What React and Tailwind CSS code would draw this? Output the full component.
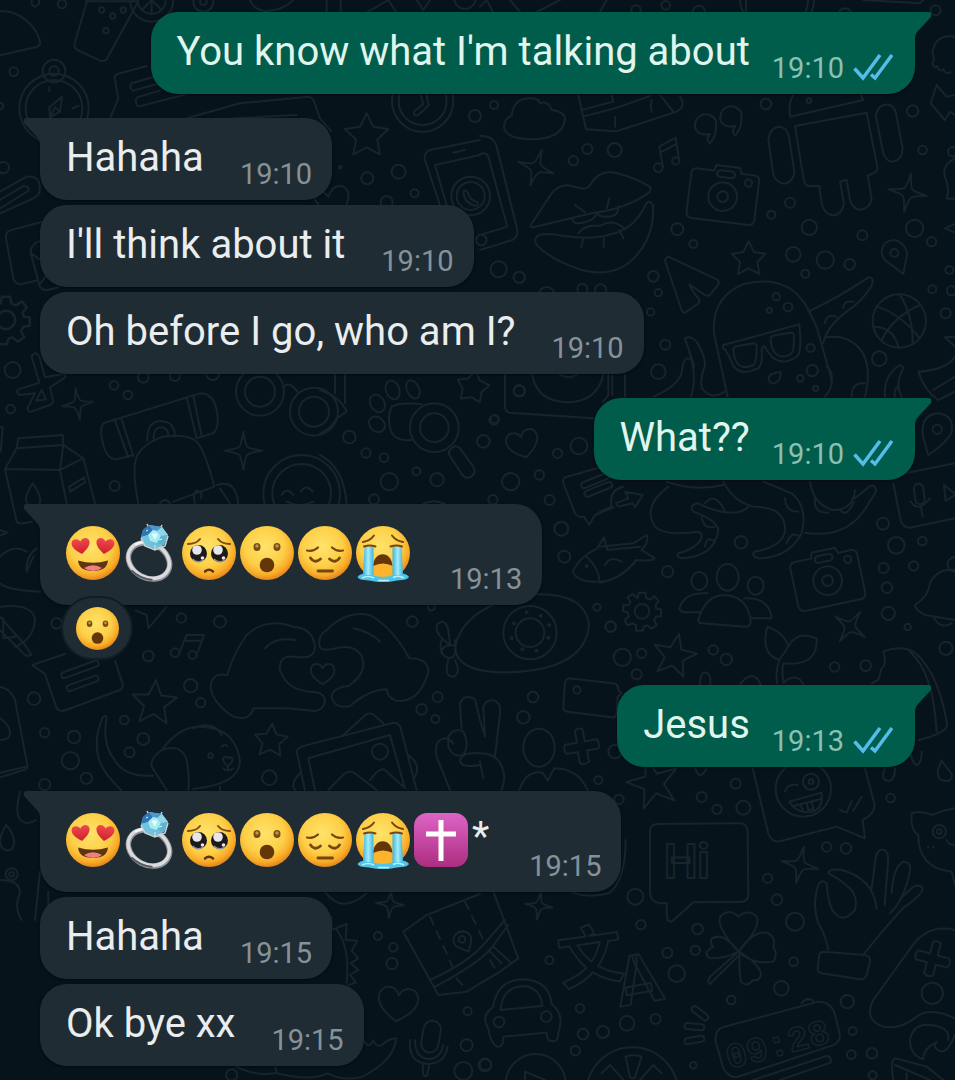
import clsx from "clsx";

const messages = [
  { id: 1, from: "me", text: "You know what I'm talking about", time: "19:10", tail: true },
  { id: 2, from: "them", text: "Hahaha", time: "19:10", tail: true },
  { id: 3, from: "them", text: "I'll think about it", time: "19:10" },
  { id: 4, from: "them", text: "Oh before I go, who am I?", time: "19:10" },
  { id: 5, from: "me", text: "What??", time: "19:10", tail: true },
  {
    id: 6,
    from: "them",
    emojis: ["heartEyes", "ring", "pleading", "wow", "pensive", "crying"],
    time: "19:13",
    tail: true,
    reaction: "wow",
  },
  { id: 7, from: "me", text: "Jesus", time: "19:13", tail: true },
  {
    id: 8,
    from: "them",
    emojis: ["heartEyes", "ring", "pleading", "wow", "pensive", "crying", "cross"],
    text: "*",
    time: "19:15",
    tail: true,
  },
  { id: 9, from: "them", text: "Hahaha", time: "19:15" },
  { id: 10, from: "them", text: "Ok bye xx", time: "19:15" },
];

/* ---------- Emoji ---------- */

const HEART = "M0 8C-6 4-9.500 0-9-4C-8.500-8-2.500-9 0-4.500C2.500-9 8.500-8 9-4C9.500 0 6 4 0 8Z";

function Face({ children }) {
  return (
    <>
      <circle cx="27" cy="27" r="27" fill="url(#face)" />
      {children}
    </>
  );
}

const emojiArt = {
  heartEyes: {
    label: "smiling face with heart eyes",
    art: (
      <Face>
        <g fill="url(#heart)">
          <path d={HEART} transform="translate(15 20) rotate(-8)" />
          <path d={HEART} transform="translate(39 20) rotate(8)" />
        </g>
        <path d="M12 34.500Q27 39 42 34.500Q41 45 27 45T12 34.500Z" fill="#5f3413" />
        <path d="M18 42Q27 36.500 36 42Q32 45 27 45T18 42Z" fill="#ef7f84" />
      </Face>
    ),
  },
  ring: {
    label: "ring",
    art: (
      <>
        <g fill="none" transform="rotate(28 25 35)">
          <ellipse cx="25" cy="35" rx="21.500" ry="17" stroke="#8f9296" strokeWidth="5.500" />
          <ellipse cx="24.500" cy="34.500" rx="21.500" ry="17" stroke="#d9dbde" strokeWidth="3.500" />
          <path d="M14 51.500Q25 55 37 50" stroke="#55585c" strokeWidth="2" />
          <path d="M5 27Q10 19 20 18" stroke="#f6f7f8" strokeWidth="2" />
        </g>
        <path d="M19 4L25 -1L38 1L44 9L40 19L31 23L20 19L17 11Z" fill="#6dbfdc" />
        <path d="M19 4L25 -1L29 4L24 9L17 11Z" fill="#2e76b5" />
        <path d="M25 -1L38 1L33 5L29 4Z" fill="#4e97cc" />
        <path d="M29 4L33 5L37 10L33 17L26 15L24 9Z" fill="#a7edf1" />
        <path d="M38 1L44 9L37 10L33 5Z" fill="#8fd6e6" />
        <path d="M24 9L26 15L31 23L20 19L17 11Z" fill="#6fc3dc" />
        <path d="M37 10L44 9L40 19L33 17Z" fill="#5fb4d2" />
        <path d="M17 12l4 8 10 4 10-4 3-10M31 24v-5M24 0l-1-2M37 1l1-2" fill="none" stroke="#cfd3d6" strokeWidth="1.500" />
        <path d="M28 8l5 0-2 5zM22 5l2-1M35 14l3-1" fill="#e4ffff" stroke="#e4ffff" />
      </>
    ),
  },
  pleading: {
    label: "pleading face",
    art: (
      <Face>
        <g fill="none" stroke="#7a4a10" strokeWidth="2" strokeLinecap="round">
          <path d="M6 18Q14 18 18 13" />
          <path d="M48 18Q40 18 36 13" />
          <path d="M23 45.500Q27 42 31 45.500" stroke="#5f3413" strokeWidth="2.500" />
        </g>
        <circle cx="16.500" cy="27.500" r="8.500" fill="#1d1a1c" />
        <circle cx="37.500" cy="27.500" r="8.500" fill="#1d1a1c" />
        <g fill="#e8e6ea">
          <circle cx="15" cy="24" r="4.800" />
          <circle cx="36" cy="24" r="4.800" />
          <circle cx="20.500" cy="32" r="1.800" />
          <circle cx="41.500" cy="32" r="1.800" />
        </g>
        <path d="M10.500 33Q16 38 21 34M32 33Q37 38 43 34" fill="none" stroke="#8a8f9c" strokeWidth="1.500" />
      </Face>
    ),
  },
  wow: {
    label: "face with open mouth",
    art: (
      <Face>
        <g fill="#7b4c12">
          <ellipse cx="17" cy="21" rx="3.500" ry="4" />
          <ellipse cx="37" cy="21" rx="3.500" ry="4" />
        </g>
        <circle cx="17" cy="20" r="1.700" fill="#c0954a" />
        <circle cx="37" cy="20" r="1.700" fill="#c0954a" />
        <circle cx="27" cy="39" r="7.300" fill="#643608" />
      </Face>
    ),
  },
  pensive: {
    label: "pensive face",
    art: (
      <Face>
        <g fill="none" stroke="#75460f" strokeWidth="2.200" strokeLinecap="round">
          <path d="M9 24.500Q15 26 20 21.500" />
          <path d="M45 24.500Q39 26 34 21.500" />
          <path d="M12.500 32Q16.500 38 22.500 33" strokeWidth="2.800" />
          <path d="M41.500 32Q37.500 38 31.500 33" strokeWidth="2.800" />
          <path d="M20 45H34.500" strokeWidth="2.800" />
        </g>
      </Face>
    ),
  },
  crying: {
    label: "loudly crying face",
    art: (
      <Face>
        <path d="M17 41C17 24 36.500 24 36.500 41Q27 35.500 17 41Z" fill="#643608" />
        <path d="M1.500 51Q5 46 14 48L40 48Q50 46 53 51Q52 54 41 54.500Q27 57.500 13 54.500Q2 54 1.500 51Z" fill="#4fc3e8" />
        <path d="M17 40Q27 35 37 40V49Q27 53 17 49Z" fill="#fbb42b" />
        <path d="M8.500 20.500H17.500V49H7Z" fill="url(#tears)" />
        <path d="M36.500 20.500H45.500L47 49H36.500Z" fill="url(#tears)" />
        <path d="M6 52Q12 49 18 52M22 54.500H33M37 51.500Q43 49 48 52" fill="none" stroke="#b8f2fb" strokeWidth="1.500" />
        <g fill="none" stroke="#75460f" strokeWidth="2" strokeLinecap="round">
          <path d="M7 16Q14 15 18 9.500" />
          <path d="M47 16Q40 15 36 9.500" />
          <path d="M8 20.500Q14 18.500 19.500 20.500" />
          <path d="M46 20.500Q40 18.500 34.500 20.500" />
        </g>
      </Face>
    ),
  },
  cross: {
    label: "latin cross",
    art: (
      <>
        <rect width="54" height="54" rx="13" fill="url(#cross)" />
        <path d="M27 7V48M12 21H42" stroke="#fff" strokeWidth="5" />
      </>
    ),
  },
};

function Emoji({ name, className }) {
  const { label, art } = emojiArt[name];
  return (
    <svg viewBox="0 0 54 54" role="img" aria-label={label} className={clsx("shrink-0 overflow-visible", className)}>
      {art}
    </svg>
  );
}

/* ---------- Chat wallpaper ---------- */

function Dots({ list }) {
  return list.map(([x, y, r]) => <circle key={`${x}-${y}-${r}`} cx={x} cy={y} r={r} />);
}

function Star({ x, y, r, inner = 0.5, turn = 0 }) {
  const points = Array.from({ length: 10 }, (_, i) => {
    const radius = i % 2 ? r * inner : r;
    const angle = (i * Math.PI) / 5 - Math.PI / 2;
    return `${Math.round(radius * Math.cos(angle))},${Math.round(radius * Math.sin(angle))}`;
  }).join(" ");
  return <polygon points={points} transform={`translate(${x} ${y}) rotate(${turn})`} />;
}

function Sparkle({ x, y, r, turn = 0 }) {
  return (
    <path
      d="M0-100Q12-25 22-20Q30-12 100 0Q30 12 22 22Q12 30 0 100Q-12 30-22 22Q-30 12-100 0Q-30-12-22-20Q-12-25 0-100Z"
      transform={`translate(${x} ${y}) rotate(${turn}) scale(${r / 100})`}
      strokeWidth={600 / r}
    />
  );
}

function Heart({ x, y, r, turn = 0 }) {
  return (
    <path
      d="M0 90C-60 55-105 10-98-35C-90-85-25-95 0-40C25-95 90-85 98-35C105 10 60 55 0 90Z"
      transform={`translate(${x} ${y}) rotate(${turn}) scale(${r / 100})`}
      strokeWidth={600 / r}
    />
  );
}

function Pill({ x, y, w, h = 18, turn = 0 }) {
  return <rect x={-w / 2} y={-h / 2} width={w} height={h} rx={h / 2} transform={`translate(${x} ${y}) rotate(${turn})`} />;
}

function Gear({ x, y, size = 1 }) {
  return (
    <g transform={`translate(${x} ${y}) scale(${size})`}>
      {/* one tooth per 45 degrees */}
      <path d="M-13-40L-10-56H10L13-40L24-35L38-45L50-30L40-18L43-8L57-6V14L42 16L36 26L44 42L28 52L16 42L6 45L2 58H-18L-18 42L-28 36L-44 42L-52 26L-40 16L-42 4L-57 0L-56-18L-40-18L-34-28L-44-42L-28-52L-18-42Z" />
      <circle r="22" />
    </g>
  );
}

function Cross({ x, y, turn }) {
  return (
    <path
      d="M-12-50Q0-60 12-50V-14H48Q58 0 48 14H14V48Q0 58-14 48V14H-48Q-58 0-48-14H-12Z"
      transform={`translate(${x} ${y}) rotate(${turn})`}
    />
  );
}

function Camera({ turn, x, y }) {
  return (
    <g transform={`translate(${x} ${y}) rotate(${turn})`}>
      <path d="M-85-75H-35L-30-92H42L48-75H88Q102-74 103-60V58Q102 74 88 75H-85Q-100 74-102 58V-60Q-100-74-85-75Z" />
      <circle r="43" />
      <circle r="16" />
      <circle cx="72" cy="-50" r="11" />
      <Pill x={2} y={-68} w={54} h={20} />
    </g>
  );
}

function Wallpaper() {
  return (
    <svg
      viewBox="0 0 955 1080"
      preserveAspectRatio="xMidYMin slice"
      aria-hidden="true"
      className="absolute inset-0 h-full w-full"
    >
      <defs>
        <radialGradient id="face" cx="0.45" cy="0.38" r="0.62">
          <stop offset="0" stopColor="#ffe36a" />
          <stop offset="0.6" stopColor="#fdcf47" />
          <stop offset="0.85" stopColor="#f8ac28" />
          <stop offset="1" stopColor="#e5861c" />
        </radialGradient>
        <linearGradient id="heart" x1="0" y1="0" x2="0" y2="1">
          <stop offset="0" stopColor="#ee4a4f" />
          <stop offset="1" stopColor="#cf1f2c" />
        </linearGradient>
        <linearGradient id="tears" x1="0" y1="0" x2="1" y2="0">
          <stop offset="0" stopColor="#3db4de" />
          <stop offset="0.5" stopColor="#a5ecf8" />
          <stop offset="1" stopColor="#3db4de" />
        </linearGradient>
        <linearGradient id="cross" x1="0" y1="0" x2="0" y2="1">
          <stop offset="0" stopColor="#dd64c6" />
          <stop offset="1" stopColor="#ad2d80" />
        </linearGradient>
      </defs>

      {/* Each group is one patch of doodles, drawn at three times its size */}
      <g fill="none" stroke="#17242b" strokeWidth="6" strokeLinejoin="round" strokeLinecap="round">
        <g transform="scale(0.3333)">
          <Dots
            list={[
              [186, 12, 13], [41, 215, 13], [0, 318, 10], [10, 503, 17], [305, 30, 8], [370, 30, 8], [338, 48, 8],
              [318, 92, 8], [1102, 535, 18], [1196, 515, 21], [1244, 580, 12], [1160, 606, 18], [1425, 348, 18],
              [1021, 502, 4], [610, 5, 30], [610, 5, 10], [1395, -5, 32], [455, 0, 65], [455, 0, 42],
            ]}
          />
          <path d="M0 34C60 30 110 80 120 125Q122 137 110 141L0 166M258 4H415L320 178Q312 186 300 182L232 150Q220 142 224 130L262 0" />
          <path d="M455 0V42M455 0L485 30M455 0L425 30M95 0V12Q105 28 117 12V0M750 0Q760 30 800 34Q850 30 880 0M980 0V38M1022 0V38M1100 38L1165 0L1190 38M1250 0L1270 30L1290 0" />
          {/* compass */}
          <circle cx="162" cy="325" r="104" />
          <circle cx="162" cy="325" r="85" />
          <circle cx="162" cy="213" r="34" />
          <circle cx="162" cy="213" r="14" />
          <path d="M186 290L148 322L150 352L180 335ZM150 352L165 322L180 335M148 262V274M218 325L236 317" />
          {/* ticket and note */}
          <path d="M440 198L352 222Q340 228 345 240L355 295L332 352M470 228L395 250Q385 262 399 272L480 250M480 272L412 292Q402 305 415 320L560 282M560 355L720 310L925 290Q940 292 944 310L960 355L995 395M700 355L890 345" />
          {/* clock */}
          <circle cx="1268" cy="303" r="92" />
          <circle cx="1268" cy="303" r="72" />
          <path d="M1262 285L1270 312L1242 335Q1240 348 1254 346L1286 316L1280 285" />
          <Star x={1100} y={408} r={68} />
          <path d="M955 612Q935 595 950 580Q970 570 985 590Q1000 550 1030 560Q1055 575 1040 612" />
          {/* phone */}
          <path d="M1440 420L1290 450Q1270 458 1275 480L1320 615M1440 465L1305 495L1340 615M1360 458L1395 450" />
          {/* pen */}
          <path d="M0 575L80 530Q120 525 120 565Q120 585 100 595L0 640M0 600L70 558Q90 558 85 573L0 625" />
        </g>

        {/* envelope and cog along the left edge */}
        <g transform="translate(0 190) scale(0.3333)">
          <path d="M125 96L35 120Q15 125 18 145L40 265Q45 285 65 282L108 272M122 152Q92 160 92 188L118 285Q124 302 142 300L175 292M95 192L122 210M118 285L140 255" />
          <Gear x={18} y={390} size={1.25} />
        </g>

        <g transform="translate(480 0) scale(0.3333)">
          <Dots
            list={[
              [42, 315, 12], [322, 447, 15], [280, 482, 14], [404, 450, 21], [592, 688, 18], [640, 732, 12],
              [56, 808, 24], [118, 832, 17], [520, 829, 16], [468, 30, 14], [557, 16, 13], [657, 35, 18],
              [1367, 31, 15], [858, 312, 16], [1298, 333, 17], [1328, 450, 13], [930, 608, 15], [874, 644, 12],
              [988, 682, 23], [1147, 706, 15], [1304, 685, 26], [1355, 725, 14], [940, 763, 22], [1036, 780, 26],
              [1109, 793, 16], [976, 821, 12], [1408, 810, 12], [1095, 45, 20], [987, 302, 7], [1418, 455, 14],
            ]}
          />
          <path d="M0 20L20 0L40 38M90 0L120 36M170 36L240 0M360 36L380 0M780 0Q780 20 790 36M798 0V36M985 0Q983 20 977 36M1003 0Q1001 20 995 36M1150 0L1320 10L1330 0" />
          {/* cloud */}
          <path d="M95 347Q100 297 145 295Q175 293 180 310Q205 300 215 330Q255 335 255 360Q245 420 145 418Q70 413 72 378Q75 353 95 347Z" />
          {/* parcel */}
          <path d="M295 285L318 388L410 394L590 335Q610 325 608 305L600 288M305 330L400 305L395 285M308 350L405 325L510 288M405 350V380M540 285L580 335M515 300Q510 320 515 335" />
          {/* quotes */}
          <path id="quote" d="M690 430Q675 422 690 402Q660 408 648 390A33 33 0 1 1 708 362Q713 405 690 430Z" />
          <use href="#quote" x="76" y="-24" />
          {/* notes */}
          <path d="M549 500L538 440L587 413L597 480M540 458L590 432" />
          <circle cx="535" cy="503" r="13" />
          <circle cx="587" cy="483" r="11" />
          <Sparkle x={168} y={503} r={56} turn={18} />
          <Sparkle x={1283} y={578} r={58} turn={10} />
          <Camera x={728} y={590} turn={7} />
          {/* robot */}
          <path d="M930 350Q925 305 940 285M930 350L1150 300L1143 285M945 378L1160 338L1193 505Q1193 517 1163 527L1175 595Q1170 627 1140 629Q1118 627 1110 599L1100 540L1080 545L1092 610Q1087 645 1057 646Q1032 641 1025 611L1018 558L985 558Q973 553 971 538Z" />
          <path d="M865 420Q870 382 897 380Q922 382 927 410L943 515Q941 545 915 551Q889 551 880 523ZM1188 350Q1190 318 1216 314Q1241 312 1248 339L1268 445Q1268 479 1240 485Q1218 485 1210 460Z" />
          {/* lips */}
          <path d="M152 675L215 580Q235 555 265 556Q295 564 313 566Q325 566 338 544Q363 509 408 519Q468 534 508 559Q516 567 508 577Q438 627 338 639L160 682Q150 682 152 675Z" />
          <path d="M172 708Q192 696 252 708Q342 720 392 703Q462 688 497 615Q505 595 519 615Q525 720 449 787Q389 835 299 808Q209 778 169 733Q161 718 172 708Z" />
          <path d="M275 658Q285 673 295 670Q345 665 350 638M352 640Q360 655 397 648Q417 643 415 618M285 615L315 637M388 595L380 625M295 700Q315 672 360 678Q400 653 435 688M310 715L304 741M371 715V741M418 690L430 715" />
          <Star x={806} y={778} r={54} />
          {/* phone, other half */}
          <path d="M0 408Q40 405 50 440L112 690Q114 710 97 720L0 750M0 462Q20 455 25 470L82 680L0 705M-12 720A12 12 0 1 0 20 720A12 12 0 1 0 -12 720" />
          <circle cx="-28" cy="588" r="58" />
          <circle cx="-28" cy="588" r="42" />
          <path d="M-50 575Q-40 565 -35 582Q-30 600 -10 605Q0 610 -12 618Q-48 610 -50 575Z" />
          {/* jellyfish, bolt, bear */}
          <path d="M1425 110Q1365 100 1357 160Q1367 180 1357 188Q1362 208 1372 198Q1377 218 1390 208Q1398 226 1412 216M1370 255L1352 310L1395 360L1410 335L1425 345M1370 255L1400 290L1425 285M1425 475Q1385 495 1395 530Q1410 570 1400 596H1425M1395 685L1425 672M1395 685L1425 698" />
          {/* pin */}
          <path d="M1270 822L1215 780Q1195 755 1215 730Q1240 710 1265 730Q1285 750 1280 770Z" />
          <circle cx="1243" cy="759" r="12" />
        </g>

        <g transform="translate(480 220) scale(0.3333)">
          <Dots
            list={[
              [535, 218, 11], [512, 276, 11], [556, 374, 15], [535, 455, 22], [118, 513, 16], [42, 600, 14],
              [200, 225, 24], [307, 206, 15], [362, 210, 17], [1357, 208, 12], [1397, 280, 15], [1415, 212, 14],
              [1198, 416, 22], [889, 230, 11], [868, 271, 8], [924, 261, 13], [992, 384, 12], [997, 452, 17],
              [961, 475, 10], [1007, 505, 8], [1258, 303, 80],
            ]}
          />
          {/* cursor */}
          <path d="M565 110L710 178Q720 186 715 193L690 225Q682 229 675 225L628 193Q638 218 658 238Q660 246 653 252L615 278Q607 278 605 270L555 122Q557 110 565 110Z" />
          {/* octopus in glasses */}
          <path d="M743 530L702 340Q694 230 792 192Q912 162 972 247Q992 277 1012 327L1055 480Q1055 510 1035 530" />
          <path d="M730 375L958 313Q966 393 953 408Q913 438 878 413Q858 388 853 378Q848 378 845 388Q850 448 825 448Q785 468 760 438Q748 408 735 388Q727 388 730 375Z" />
          <path id="lens" d="M760 390Q760 378 775 378L820 370Q832 370 830 385Q830 430 820 435Q790 450 772 430Q760 410 760 390Z" />
          <use href="#lens" x="112" y="-32" />
          <path d="M866 475Q866 460 901 455Q906 475 889 487Q869 497 866 475ZM985 275Q1080 230 1165 172Q1185 172 1175 197Q1150 240 1100 275Q1040 320 1030 370M1035 352Q1115 342 1150 402Q1175 452 1155 530M1035 310Q1040 280 1070 290M1090 265Q1090 240 1120 245M1115 530Q1115 485 1155 490M1040 440Q1060 450 1055 490" />
          <path d="M615 355Q630 345 650 365Q675 405 675 435Q655 495 670 510Q695 540 735 515M615 355Q635 415 643 440M520 530Q590 500 605 460Q610 400 635 420Q650 480 633 530" />
          {/* basketball */}
          <path d="M1190 260Q1260 280 1320 355M1320 255Q1240 290 1205 360M1260 224Q1300 290 1298 372M1180 320Q1240 320 1255 380" />
          <path d="M1315 455Q1400 450 1425 410M1315 455Q1335 515 1375 540L1425 515M1360 510L1425 470M1395 352L1425 350M1395 352L1425 380M1260 435Q1210 465 1215 530M1260 435Q1275 440 1265 455Q1245 495 1265 530M1245 530Q1240 510 1255 500" />
          {/* record player */}
          <path d="M75 465V560Q75 575 90 578L340 595M157 465Q170 545 265 547Q350 545 370 465M240 465Q265 478 290 465M385 465V525L370 545M397 465V525M435 465V530" />
        </g>

        <g transform="translate(0 370) scale(0.3333)">
          <Dots
            list={[
              [430, 22, 16], [525, 18, 15], [638, 10, 20], [342, 46, 13], [384, 75, 13], [32, 117, 13], [38, 0, 24],
              [344, 348, 15], [544, 744, 14], [660, 755, 18], [170, 760, 16], [525, 848, 13], [578, 855, 12],
              [780, 65, 72], [780, 65, 45], [942, 125, 72], [942, 125, 45], [905, 370, 115], [905, 370, 88],
            ]}
          />
          <Sparkle x={233} y={102} r={46} turn={-8} />
          <Sparkle x={730} y={242} r={57} />
          <path d="M105 -50Q90 -45 98 -30L118 38L55 58Q45 65 58 75L105 70L82 115Q85 128 95 124L150 105Q162 100 158 88L150 52L195 22Q200 10 190 12L135 22L118 -40Q112 -52 105 -50M125 60L108 92L138 88Z" />
          {/* rolled mat */}
          <path d="M310 160Q300 175 305 200Q315 270 350 268L400 255M310 160L600 70Q640 70 650 120Q660 170 640 190L590 205M345 152L385 262M365 148L400 258M560 82L590 205M580 78L605 198M442 212Q440 155 482 153Q525 155 525 200M460 206Q462 172 482 172Q505 172 505 198" />
          {/* backpack */}
          <path d="M415 400Q395 300 410 260Q430 220 490 200Q570 190 595 220Q620 260 643 350L520 395M650 345Q710 325 715 405M660 355L690 400M480 400Q495 380 510 400M585 400Q575 360 595 362Q610 370 602 385" />
          {/* milk */}
          <path d="M55 205L188 195L190 225L50 235ZM50 235L15 297L180 300L190 225L250 265L285 400M180 300L200 400M250 265L180 300M15 297L50 455Q55 463 70 460L95 455M98 340Q68 385 83 402M98 340Q128 380 118 402M208 350L253 322L255 337L210 365ZM0 170L8 172L2 245" />
          <path d="M845 375Q860 350 880 375M903 365Q918 340 938 365M860 395Q900 415 940 395M850 50Q870 30 895 70" />
          <path d="M0 480L22 488L0 497M0 560Q40 520 80 545M0 640Q20 660 120 665M80 605Q75 560 110 535M80 605L100 560M0 710Q100 700 105 750Q100 810 45 830M0 740L75 825L95 855L78 858L0 780M10 805V745M45 800L15 805M408 722L440 735L445 775L500 710" />
          <path d="M538 848L560 795H612L590 855M555 812H605" />
        </g>

        <g transform="translate(320 370) scale(0.3333)">
          <Dots
            list={[
              [88, 201, 19], [138, 249, 14], [192, 263, 13], [208, 335, 26], [289, 304, 12], [351, 329, 20],
              [162, 388, 15], [490, 214, 19], [524, 147, 12], [598, 62, 17], [572, 335, 26], [519, 389, 14],
              [658, 315, 14], [713, 250, 14], [777, 228, 25], [689, 390, 15], [724, 476, 21], [733, 560, 18],
              [831, 712, 11], [872, 770, 15], [277, 755, 16], [334, 712, 10], [343, 173, 73], [343, 173, 43],
              [630, 788, 80], [630, 788, 43], [620, 727, 3], [662, 737, 3], [688, 765, 3], [685, 803, 3],
              [650, 842, 3], [607, 838, 3], [575, 805, 3], [582, 760, 3], [800, 588, 3],
            ]}
          />
          {/* paw and magnifier */}
          <ellipse cx="172" cy="100" rx="21" ry="28" transform="rotate(-30 172 100)" />
          <ellipse cx="218" cy="60" rx="20" ry="29" transform="rotate(-20 218 60)" />
          <ellipse cx="279" cy="58" rx="18" ry="29" transform="rotate(-25 279 58)" />
          <ellipse cx="171" cy="163" rx="26" ry="21" transform="rotate(40 171 163)" />
          <path d="M305 103Q240 95 215 110Q200 140 213 185Q228 215 273 210M390 240Q405 220 420 235L460 290Q472 310 450 322Q435 327 425 312L388 255Q385 245 390 240Z" />
          <Heart x={608} y={220} r={48} turn={-15} />
          <Star x={458} y={52} r={50} turn={10} inner={0.6} />
          <path d="M45 0V70M75 0V100M0 60Q60 80 80 125L50 145Q30 180 0 190M0 255Q70 290 80 400M310 402Q340 385 375 402" />
          {/* chat bubble */}
          <path d="M850 290L735 322Q725 330 732 345L765 430Q775 445 792 440L808 465L825 435L880 412" />
          <Pill x={825} y={332} w={88} turn={-22} />
          <Pill x={835} y={358} w={88} turn={-22} />
          {/* fish */}
          <path d="M960 530L862 540L852 502L832 535Q778 560 758 605Q773 635 818 635Q898 640 948 570M800 560Q840 600 838 635M855 585Q870 555 905 575" />
          {/* avocado */}
          <path d="M405 830Q435 700 645 673Q795 668 807 763Q797 908 537 907Q407 902 405 830ZM390 825Q345 795 350 765Q375 740 385 780ZM365 850Q360 825 405 825" />
        </g>

        <g transform="translate(600 370) scale(0.3333)">
          <Dots
            list={[
              [203, 605, 17], [423, 517, 19], [849, 461, 18], [889, 526, 25], [967, 513, 13], [851, 594, 15],
              [941, 588, 14], [861, 653, 16], [865, 730, 20], [923, 771, 10], [32, 770, 16], [1012, 178, 14],
              [1065, 583, 22],
            ]}
          />
          <Camera x={683} y={632} turn={-12} />
          {/* group */}
          <ellipse cx="383" cy="622" rx="33" ry="40" />
          <ellipse cx="298" cy="633" rx="24" ry="27" />
          <ellipse cx="467" cy="647" rx="24" ry="27" />
          <path d="M295 750Q315 675 375 675Q445 680 452 755Q452 770 437 770L305 760Q295 760 295 750ZM322 670Q253 665 238 715Q238 727 258 727H300M433 685Q503 680 515 740Q515 748 505 745H452" />
          <Gear x={126} y={724} />
          <Sparkle x={750} y={770} r={54} turn={35} />
          {/* voice card */}
          <path d="M880 340L900 440Q905 475 930 473L1065 445M915 310L1065 280M932 395Q955 430 990 385M963 410L968 438M1032 345L1037 393L1067 373Z" />
          <Pill x={958} y={372} w={62} h={28} turn={82} />
          <path d="M985 255L968 195Q963 135 1013 130Q1063 135 1055 185Q1045 215 985 255Z" />
          {/* bell */}
          <path d="M1065 600Q1010 595 990 640Q985 680 945 705Q945 720 975 735L1065 750M1000 740Q1020 780 1055 760" />
          {/* tentacles */}
          <path d="M205 350Q125 410 165 470Q195 500 295 485Q315 495 295 520Q265 545 235 550Q227 560 245 565Q345 560 355 480Q350 450 280 425Q265 405 295 400Q335 420 365 425Q425 435 445 410" />
          <path d="M370 335Q400 395 460 410Q560 410 555 485Q545 530 465 545Q450 555 475 565Q565 565 605 490Q625 410 575 370L490 335M315 400Q345 365 373 420M305 440Q310 480 345 470M315 530Q320 495 345 515M555 385Q555 425 595 425M560 520Q575 480 600 500" />
          <path d="M200 335Q280 365 370 345M630 335Q640 405 700 420Q760 420 765 360M645 385Q640 430 685 428M720 420Q740 445 762 395M615 488Q735 508 795 418L828 365Q828 340 808 350L765 385" />
          <path d="M0 530L20 528L100 520L140 495Q148 515 125 540L165 565Q155 575 110 570Q60 630 0 638M48 400L85 385L75 365L128 375L105 412L98 400L55 410ZM0 425L35 410Q25 360 70 350" />
        </g>

        <g transform="translate(0 640) scale(0.3333)">
          <Dots
            list={[
              [445, 48, 16], [102, 176, 19], [572, 137, 20], [602, 188, 14], [134, 278, 14], [222, 291, 19],
              [373, 240, 13], [430, 297, 18], [389, 337, 15], [211, 362, 26], [259, 415, 17], [134, 434, 17],
              [808, 413, 22], [1265, 208, 16], [1313, 171, 15], [1306, 237, 12], [35, 703, 18], [35, 703, 7],
              [632, 347, 7], [1140, 335, 24],
            ]}
          />
          <Star x={463} y={190} r={70} turn={4} inner={0.45} />
          <Star x={813} y={303} r={52} turn={4} />
          <path d="M195 42L97 75L135 102L170 205Q178 215 190 213L360 150Q370 145 368 132L345 62" />
          <Pill x={240} y={88} w={118} turn={-20} />
          <Pill x={248} y={130} w={100} turn={-20} />
          <path d="M0 140Q30 145 45 180L82 375Q84 387 72 390L0 412M0 398L78 380M0 235Q30 255 30 280Q30 300 0 300" />
          {/* dog */}
          <path d="M485 330Q545 250 615 262Q705 267 720 362Q720 432 580 447M485 330Q450 355 455 380L500 450M485 330Q545 310 560 360Q570 410 565 450M580 265Q640 240 665 285M320 232Q315 224 308 232Q278 302 298 362Q313 402 363 450M320 232Q305 312 345 362Q375 412 460 407M660 440V452M668 355Q678 345 686 355Q696 347 698 358Q696 370 683 378Q673 373 668 355ZM684 380V390M670 385Q680 397 700 385M665 320Q675 310 682 318" />
          {/* heart hands */}
          <path d="M682 105Q700 40 740-15Q800-70 880-40Q940-35 945 20Q945 60 885 50Q835 45 840 90Q860 150 930 155Q975 155 975 185Q970 210 945 213L860 205L760 205Q750 245 700 230Q640 190 632 145Q632 95 682 105M795 25Q825-10 885 0M760 205L755 220" />
          <path d="M980-30Q1040-90 1110-75Q1180-35 1228 55Q1285 55 1285 95Q1265 175 1205 183Q1165 183 1160 148Q1110 148 1050 198Q1000 208 995 168Q1000 143 1045 138Q1105 98 1085 48Q1065 13 1015 23Q960 38 958 15Q955-15 980-30M1060-35Q1110-25 1140 5" />
          <Heart x={968} y={100} r={36} />
          {/* photos */}
          <path d="M915 450L890 335Q895 320 915 317L1180 248Q1198 248 1202 263L1250 450M945 450L925 355L1170 285L1215 445M985 450L1035 400Q1050 390 1065 400L1130 450M1110 420Q1140 380 1155 390L1210 440M1030 285L1100 222Q1115 217 1125 227L1150 250M900 400Q870 430 885 450M1225 345Q1265 375 1245 410" />
          {/* victory hand */}
          <path d="M1350 450L1310 350Q1300 300 1335 295Q1350 295 1360 312M1385 265L1380 190Q1395 160 1425 178L1440 240L1455 290L1450 200Q1460 175 1485 182Q1505 192 1500 222L1485 350M1345 290Q1365 260 1390 275Q1410 315 1390 345Q1360 355 1345 320ZM1440 375Q1380 385 1380 360Q1390 335 1440 340Q1500 340 1512 400Q1515 425 1505 450M1440 365L1450 415" />
          <path d="M60 455Q45 515 58 535Q78 560 108 540M18 555Q-12 605 8 625Q38 645 43 605Q38 575 18 555ZM0 720Q60 720 60 760Q40 800 65 840M120 695L105 840M145 755V840M1325 0Q1315 30 1335 50Q1375 70 1365 0M1345 60Q1330 110 1360 110Q1385 100 1365 60" />
        </g>

        <g transform="translate(480 640) scale(0.3333)">
          <Dots
            list={[
              [427, 52, 26], [485, 40, 14], [470, 103, 15], [700, 30, 14], [739, 58, 17], [1064, 81, 14],
              [1157, 77, 16], [1398, 25, 20], [159, 171, 16], [130, 232, 19], [291, 150, 11], [355, 421, 12],
              [417, 478, 14], [405, 335, 20], [665, 471, 15], [767, 431, 15], [711, 508, 14], [790, 503, 21],
              [1040, 621, 14], [1098, 625, 16], [1232, 474, 13], [863, 715, 14], [466, 770, 24], [891, 779, 16],
              [945, 845, 27], [483, 854, 14], [653, 867, 16], [646, 931, 14], [562, 938, 15], [590, 1001, 25],
              [208, 961, 12], [941, 965, 13], [904, 1045, 22], [754, 1080, 13], [1102, 1085, 20], [300, 1105, 13],
              [441, 1150, 22], [527, 1137, 15], [309, 1182, 16], [369, 1176, 18], [286, 1232, 14], [15, 1275, 19],
              [640, 1276, 10], [1118, 1173, 12], [1114, 1244, 13], [1176, 1240, 16], [1178, 1306, 12],
              [1357, 1060, 32], [970, 447, 83], [993, 425, 24], [993, 425, 7], [1378, 575, 20], [1378, 575, 7],
              [57, 1146, 16], [199, 1130, 16], [457, 1360, 138], [167, 1332, 90],
            ]}
          />
          <Star x={583} y={48} r={68} turn={12} inner={0.42} />
          <Star x={520} y={430} r={82} turn={-15} inner={0.38} />
          <path d="M265 115L400 130Q415 132 415 150L425 160L413 170L410 222Q407 234 395 232L262 215Q248 212 250 200L255 130Q257 118 265 115Z" />
          <ellipse cx="177" cy="323" rx="47" ry="57" />
          <path d="M118 450Q138 390 188 398L203 422L223 385Q293 385 323 450" />
          <Cross x={305} y={320} turn={-10} />
          {/* winking sticker */}
          <path d="M818 385L865 580Q873 608 900 604L1070 560L1155 595L1148 540Q1188 520 1183 490L1155 385M915 455Q920 430 953 435M928 485L1025 458Q1030 508 995 516Q950 521 928 485ZM940 498L1020 478M960 495L968 508M980 490L985 510L1000 508L995 485M1080 510L1100 518L1115 483M1120 512L1145 470" />
          <path d="M1215 385Q1200 420 1225 423Q1245 423 1245 385M1385 362Q1360 412 1390 422Q1420 427 1415 402ZM1295 520Q1325 510 1355 525Q1395 510 1425 505M1295 520Q1290 570 1315 585Q1315 685 1415 695L1425 735M1400 600Q1405 615 1425 615M1345 620V622M1360 620V622" />
          {/* ice cream */}
          <path d="M1210 35Q1290 5 1330 65Q1380 125 1402 255Q1397 280 1317 300M1210 35Q1222 75 1205 85L1195 120L1175 130M1290 35Q1360 95 1370 275M1290 330Q1295 370 1310 375Q1325 370 1325 335" />
          {/* sprout */}
          <path d="M892 130Q885 95 898 60Q840 40 862 -40Q915 -20 925 20Q950 -30 1010 -5Q1015 80 910 70Q905 90 910 128Q950 95 970 133M925 20L898 60M780 133Q820 83 842 133M660 133Q660 93 680 98Q695 108 690 133M645 385Q660 425 680 385M437 600Q437 720 387 760Q327 775 277 758" />
          {/* greeting bubble */}
          <path d="M530 552L780 550Q802 550 803 575L805 765Q805 783 785 785L640 787L575 845Q563 845 561 833L560 790H540Q510 785 510 755V575Q510 555 530 552Z" />
          <text x="552" y="714" fontFamily="Roboto, sans-serif" fontWeight="700" fontSize="142">Hi</text>
          <Sparkle x={960} y={675} r={56} turn={12} />
          <Sparkle x={177} y={797} r={42} turn={8} />
          <text x="232" y="1022" fontFamily="'Noto Sans CJK SC', sans-serif" fontWeight="700" fontSize="195" transform="rotate(-8 320 940)">文</text>
          <text x="405" y="1090" fontFamily="Roboto, sans-serif" fontWeight="700" fontSize="205" transform="rotate(-10 470 1010)">A</text>
          {/* clover */}
          <path d="M775 935Q700 850 725 825Q750 805 775 830Q805 805 830 830Q845 860 775 935ZM775 935Q735 875 695 895Q690 915 700 920Q665 940 690 955Q740 955 775 935ZM775 935Q825 865 865 880Q890 895 880 920Q895 945 880 965Q820 975 775 935ZM778 935Q778 1005 783 1025Q803 1045 818 1020Q838 1025 843 1005Q843 975 778 935ZM770 940L690 1010Q680 1025 690 1032L778 945" />
          {/* ok hand */}
          <path d="M1045 930Q1035 880 1015 850Q995 790 1015 735Q1025 715 1040 730Q1045 800 1065 820Q1090 850 1125 810Q1135 770 1110 745Q1070 710 1045 700Q1045 685 1085 690Q1180 715 1190 805M1175 745L1187 655Q1192 625 1212 630Q1227 635 1224 670L1214 795M1235 760Q1240 680 1270 665Q1295 665 1290 695Q1270 785 1230 820M1262 775L1300 740Q1320 732 1328 745Q1328 765 1268 805Q1200 880 1150 945" />
          <path d="M1030 935L1155 945Q1173 948 1170 965L1160 1005Q1155 1020 1140 1018L1025 1000Q1010 995 1013 985L1018 945Q1021 935 1030 935Z" />
          {/* gamepad */}
          <path d="M1425 870Q1345 850 1295 920L1180 1080Q1150 1140 1210 1160Q1260 1170 1310 1130Q1350 1100 1425 1135" />
          <Cross x={1358} y={957} turn={15} />
          <path d="M1425 1185Q1405 1235 1385 1235Q1355 1225 1370 1205M1290 1200Q1300 1150 1350 1155Q1410 1160 1405 1200M1290 1200Q1290 1245 1330 1258Q1330 1225 1365 1210M1245 1255Q1230 1260 1240 1320M1245 1255L1340 1280L1390 1320M1245 1275L1350 1320M1280 1300V1320" />
          {/* alarm clock */}
          <path d="M728 1162L1015 1085Q1055 1085 1065 1125L1080 1185Q1080 1210 1055 1217L770 1312Q745 1312 730 1285L707 1205Q703 1172 728 1162ZM965 1090Q980 1070 1000 1082M820 1320L1040 1248Q1055 1248 1052 1268L900 1320" />
          <text x="748" y="1288" fontFamily="'Liberation Mono', monospace" fontWeight="700" fontSize="106" strokeWidth="4" transform="rotate(-15 748 1288)">09:28</text>
          <Pill x={660} y={1120} w={58} turn={38} />
          <Pill x={643} y={1160} w={60} turn={5} />
          <Pill x={643} y={1200} w={60} turn={-10} />
          {/* car */}
          <path d="M25 1165Q0 1130 40 1100Q50 1020 130 1018Q210 1023 215 1093Q255 1123 235 1178Q235 1208 215 1203Q200 1203 200 1178L70 1190Q70 1225 50 1220Q30 1205 25 1165ZM62 1110Q67 1040 132 1038Q182 1043 187 1098Z" />
          {/* orange and play */}
          <path d="M437 1250Q460 1242 485 1250L465 1312Q457 1320 450 1312ZM365 1300L390 1275L430 1320M545 1300L520 1275L480 1320M135 1320V1295L195 1320" />
        </g>

        <g transform="translate(200 880) scale(0.3333)">
          <Dots
            list={[
              [534, 168, 12], [580, 202, 13], [576, 251, 17], [803, 394, 12], [800, 496, 18], [790, 573, 27],
              [856, 554, 17], [95, 585, 17], [786, 178, 10],
            ]}
          />
          <Sparkle x={570} y={72} r={42} turn={5} />
          <Heart x={594} y={370} r={60} turn={6} />
          {/* folded map */}
          <path d="M840 42L680 105L610 155L715 345L800 335L900 275L955 235L880 35M690 300Q800 250 850 195L915 120M705 320Q820 260 870 210L925 135M865 210L905 250M880 200L930 245M805 215L770 200Q750 180 770 160Q795 145 812 168Q817 188 805 215Z" />
          <path d="M690 110L760 265M795 65L850 180M870 240L885 265M770 295L800 330" strokeDasharray="26 22" />
          {/* microphone */}
          <Pill x={693} y={470} w={96} h={52} turn={-80} />
          <path d="M630 480Q625 550 685 552Q735 550 743 500M645 480Q645 535 687 537Q722 535 730 495M668 555L670 585Q678 595 683 580L688 555" />
          {/* crocodile */}
          <path d="M395 110V150L440 132L437 180L472 182L455 212L475 235L452 250L475 270L450 285L468 308L445 315M410 150Q450 200 440 310M490 480Q505 510 520 482Q535 510 555 487Q575 475 588 475Q585 540 488 590Q430 605 383 580Q330 605 230 580L225 555M100 555Q160 590 225 580M375 35Q425 105 500 40" />
        </g>
      </g>
    </svg>
  );
}

/* ---------- Messages ---------- */

function Tail({ mine }) {
  return (
    <svg
      viewBox="0 0 18 26"
      aria-hidden="true"
      className={clsx("absolute top-0 h-[26px] w-[18px]", mine ? "left-full -ml-px -scale-x-100 text-[#005d4b]" : "right-full -mr-px text-[#202c33]")}
    >
      <path d="M18 0H3.500C0.500 0 0 3 1.500 5.500L14 19Q17 22 17 26H18Z" fill="currentColor" />
    </svg>
  );
}

function Ticks() {
  return (
    <svg viewBox="0 0 40 28" role="img" aria-label="Read" className="mb-[5px] ml-[9px] h-7 w-10 text-[#53bdeb]">
      <path d="M1.500 15.500L10 25L27 2M18 21.500L22 25L39 2" fill="none" stroke="currentColor" strokeWidth="3.500" />
    </svg>
  );
}

function Message({ from, text, emojis, time, tail, reaction }) {
  const mine = from === "me";
  return (
    <li className={clsx("flex", mine ? "justify-end" : "justify-start", tail ? "mt-6 first:mt-0" : "mt-[5px]", reaction && "pb-14")}>
      <div
        className={clsx(
          "relative flex items-end rounded-[27px] pb-2 pl-[26px] shadow-sm shadow-black/40",
          emojis ? "pt-[22px]" : "pt-4",
          mine ? "bg-[#005d4b] pr-[22px] text-[#e0f5ee]" : "bg-[#202c33] pr-5 text-[#e9edef]",
          tail && (mine ? "rounded-tr-none" : "rounded-tl-none")
        )}
      >
        {tail && <Tail mine={mine} />}

        {emojis ? (
          <div className="mr-1 mb-[17px] flex h-[54px] gap-1">
            {emojis.map((name) => (
              <Emoji key={name} name={name} className="size-[54px]" />
            ))}
            {text && <p className="text-[40px] leading-[48px]">{text}</p>}
          </div>
        ) : (
          <p className="mb-2.5 text-[40px] leading-[48px]">{text}</p>
        )}

        <time className={clsx("text-[29px] leading-9", mine ? "ml-[22px] text-[#8dc0b3]" : "ml-9 text-[#85929a]")}>
          {time}
        </time>
        {mine && <Ticks />}

        {reaction && (
          <button
            type="button"
            aria-label="Reactions"
            className="absolute top-[92px] left-[21px] flex h-16 w-[72px] items-center justify-center rounded-full border-2 border-[#121c22] bg-[#202c33]"
          >
            <Emoji name={reaction} className="size-[43px]" />
          </button>
        )}
      </div>
    </li>
  );
}

export default function App() {
  return (
    <main className="relative min-h-screen overflow-hidden bg-[#07131a] font-['Roboto',sans-serif]">
      <Wallpaper />
      <ol className="relative px-10 pt-3 pb-3.5">
        {messages.map(({ id, ...message }) => (
          <Message key={id} {...message} />
        ))}
      </ol>
    </main>
  );
}
